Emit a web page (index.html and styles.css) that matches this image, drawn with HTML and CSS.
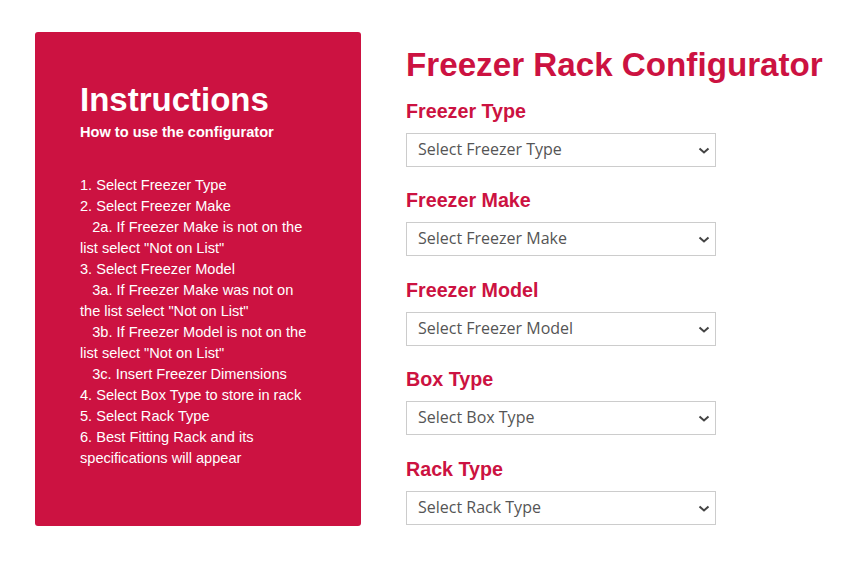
FILE: index.html
```html
<!DOCTYPE html>
<html lang="en">
<head>
<meta charset="utf-8">
<title>Freezer Rack Configurator</title>
<link rel="stylesheet" href="styles.css">
</head>
<body>
<div class="page">
  <aside class="panel">
    <h2 class="panel-title">Instructions</h2>
    <p class="panel-sub">How to use the configurator</p>
    <p class="steps">1. Select Freezer Type<br>
2. Select Freezer Make<br>
&nbsp;&nbsp;&nbsp;2a. If Freezer Make is not on the list select "Not on List"<br>
3. Select Freezer Model<br>
&nbsp;&nbsp;&nbsp;3a. If Freezer Make was not on the list select "Not on List"<br>
&nbsp;&nbsp;&nbsp;3b. If Freezer Model is not on the list select "Not on List"<br>
&nbsp;&nbsp;&nbsp;3c. Insert Freezer Dimensions<br>
4. Select Box Type to store in rack<br>
5. Select Rack Type<br>
6. Best Fitting Rack and its specifications will appear</p>
  </aside>
  <main class="config">
    <h1 class="config-title">Freezer Rack Configurator</h1>
    <div class="field">
      <label class="field-label">Freezer Type</label>
      <div class="select-wrap">
        <select class="select"><option>Select Freezer Type</option></select>
        <svg class="chev" width="12" height="7" viewBox="0 0 12 7"><path d="M1.5 1.5 L6 5.5 L10.5 1.5" fill="none" stroke="#444" stroke-width="2"/></svg>
      </div>
    </div>
    <div class="field">
      <label class="field-label">Freezer Make</label>
      <div class="select-wrap">
        <select class="select"><option>Select Freezer Make</option></select>
        <svg class="chev" width="12" height="7" viewBox="0 0 12 7"><path d="M1.5 1.5 L6 5.5 L10.5 1.5" fill="none" stroke="#444" stroke-width="2"/></svg>
      </div>
    </div>
    <div class="field">
      <label class="field-label">Freezer Model</label>
      <div class="select-wrap">
        <select class="select"><option>Select Freezer Model</option></select>
        <svg class="chev" width="12" height="7" viewBox="0 0 12 7"><path d="M1.5 1.5 L6 5.5 L10.5 1.5" fill="none" stroke="#444" stroke-width="2"/></svg>
      </div>
    </div>
    <div class="field">
      <label class="field-label">Box Type</label>
      <div class="select-wrap">
        <select class="select"><option>Select Box Type</option></select>
        <svg class="chev" width="12" height="7" viewBox="0 0 12 7"><path d="M1.5 1.5 L6 5.5 L10.5 1.5" fill="none" stroke="#444" stroke-width="2"/></svg>
      </div>
    </div>
    <div class="field">
      <label class="field-label">Rack Type</label>
      <div class="select-wrap">
        <select class="select"><option>Select Rack Type</option></select>
        <svg class="chev" width="12" height="7" viewBox="0 0 12 7"><path d="M1.5 1.5 L6 5.5 L10.5 1.5" fill="none" stroke="#444" stroke-width="2"/></svg>
      </div>
    </div>
  </main>
</div>
</body>
</html>
```
FILE: styles.css
```css
html, body {
  margin: 0;
  padding: 0;
  background: #fff;
}
body {
  font-family: "Liberation Sans", Arial, sans-serif;
}
.page {
  display: flex;
  align-items: flex-start;
  padding: 32px 0 0 35px;
}
.panel {
  box-sizing: border-box;
  width: 326px;
  height: 494px;
  background: #cc1241;
  border-radius: 3px;
  color: #fff;
  padding: 48px 45px 0 45px;
}
.panel-title {
  margin: 0;
  font-size: 33px;
  line-height: 1.2;
  font-weight: 700;
}
.panel-sub {
  margin: 4px 0 0 0;
  font-size: 14.6px;
  line-height: 17px;
  font-weight: 700;
}
.steps {
  margin: 34px 0 0 0;
  font-size: 14.6px;
  line-height: 21px;
}
.config {
  margin-left: 45px;
  padding-top: 13px;
  display: flex;
  flex-direction: column;
  gap: 22.5px;
}
.config-title {
  margin: 0 0 -7.5px 0;
  font-size: 33.2px;
  line-height: 1.2;
  font-weight: 700;
  color: #cc1241;
  white-space: nowrap;
}
.field {
  display: flex;
  flex-direction: column;
  gap: 11px;
}
.field-label {
  font-size: 19.7px;
  line-height: 22px;
  font-weight: 700;
  color: #cc1241;
}
.select-wrap {
  position: relative;
  width: 310px;
  height: 34px;
}
.select {
  -webkit-appearance: none;
  appearance: none;
  box-sizing: border-box;
  width: 310px;
  height: 34px;
  margin: 0;
  border: 1px solid #cccccc;
  border-radius: 0;
  background: #fff;
  padding: 0 30px 2px 11px;
  font-family: "Open Sans", sans-serif;
  font-size: 16px;
  line-height: 30px;
  color: #555;
}
.chev {
  position: absolute;
  right: 6px;
  top: 14px;
  pointer-events: none;
}
```
